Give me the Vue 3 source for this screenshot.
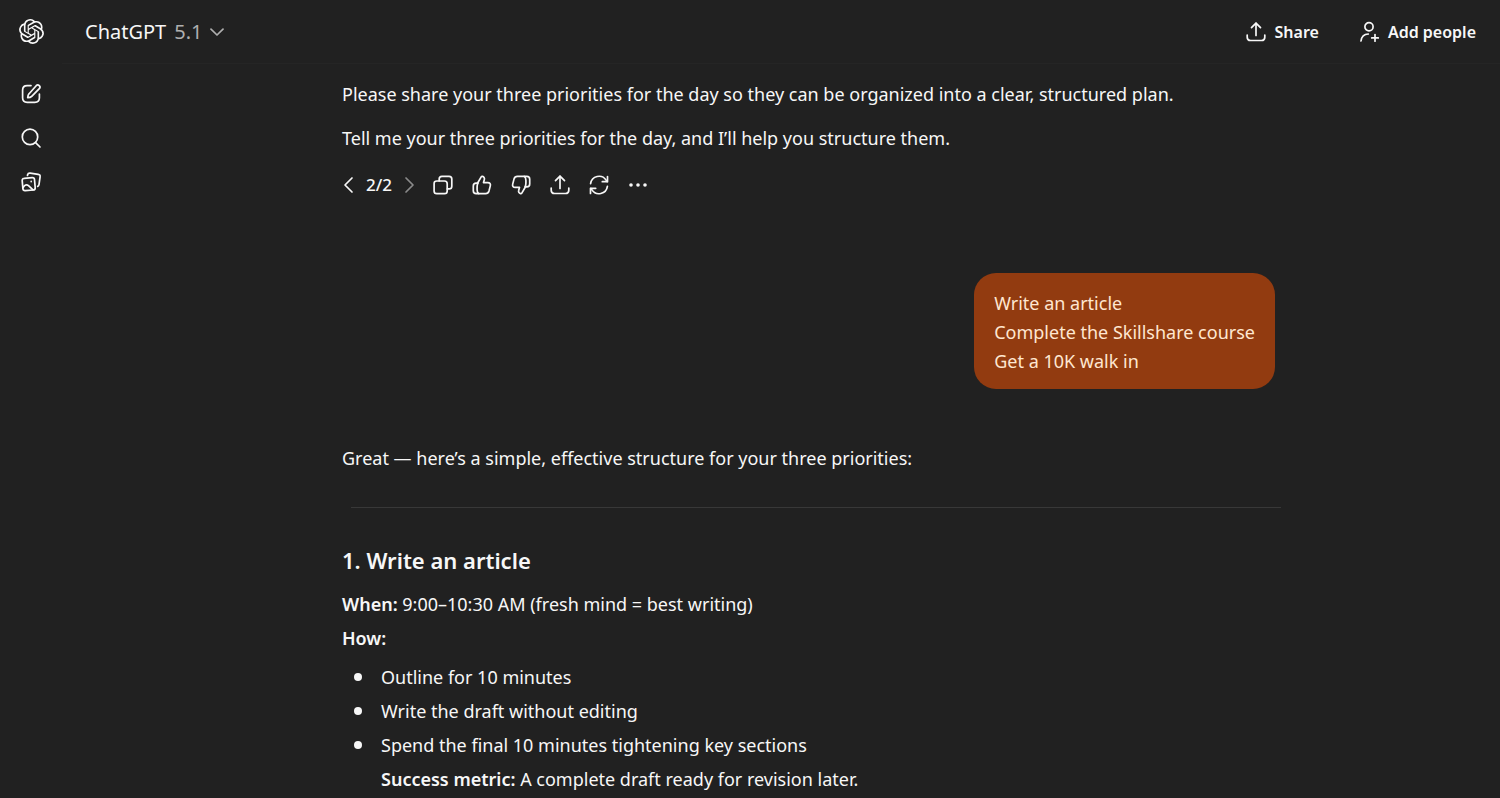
<template>
  <div class="app">
    <nav class="sidebar" aria-label="Sidebar">
      <a href="#" class="logo" aria-label="Home">
        <svg viewBox="0 0 24 24" width="25" height="25" fill="currentColor">
          <path
            d="M22.2819 9.8211a5.9847 5.9847 0 0 0-.5157-4.9108 6.0462 6.0462 0 0 0-6.5098-2.9A6.0651 6.0651 0 0 0 4.9807 4.1818a5.9847 5.9847 0 0 0-3.9977 2.9 6.0462 6.0462 0 0 0 .7427 7.0966 5.98 5.98 0 0 0 .511 4.9107 6.051 6.051 0 0 0 6.5146 2.9001A5.9847 5.9847 0 0 0 13.2599 24a6.0557 6.0557 0 0 0 5.7718-4.2058 5.9894 5.9894 0 0 0 3.9977-2.9001 6.0557 6.0557 0 0 0-.7475-7.0729zm-9.022 12.6081a4.4755 4.4755 0 0 1-2.8764-1.0408l.1419-.0804 4.7783-2.7582a.7948.7948 0 0 0 .3927-.6813v-6.7369l2.02 1.1686a.071.071 0 0 1 .038.052v5.5826a4.504 4.504 0 0 1-4.4945 4.4944zm-9.6607-4.1254a4.4708 4.4708 0 0 1-.5346-3.0137l.142.0852 4.783 2.7582a.7712.7712 0 0 0 .7806 0l5.8428-3.3685v2.3324a.0804.0804 0 0 1-.0332.0615L9.74 19.9502a4.4992 4.4992 0 0 1-6.1408-1.6464zM2.3408 7.8956a4.485 4.485 0 0 1 2.3655-1.9728V11.6a.7664.7664 0 0 0 .3879.6765l5.8144 3.3543-2.0201 1.1685a.0757.0757 0 0 1-.071 0l-4.8303-2.7865A4.504 4.504 0 0 1 2.3408 7.872zm16.5963 3.8558L13.1038 8.364 15.1192 7.2a.0757.0757 0 0 1 .071 0l4.8303 2.7913a4.4944 4.4944 0 0 1-.6765 8.1042v-5.6772a.79.79 0 0 0-.407-.667zm2.0107-3.0231l-.142-.0852-4.7735-2.7818a.7759.7759 0 0 0-.7854 0L9.409 9.2297V6.8974a.0662.0662 0 0 1 .0284-.0615l4.8303-2.7866a4.4992 4.4992 0 0 1 6.6802 4.66zM8.3065 12.863l-2.02-1.1638a.0804.0804 0 0 1-.038-.0567V6.0742a4.4992 4.4992 0 0 1 7.3757-3.4537l-.142.0805L8.704 5.459a.7948.7948 0 0 0-.3927.6813zm1.0976-2.3654l2.602-1.4998 2.6069 1.4998v2.9994l-2.5974 1.4997-2.6067-1.4997Z"
          />
        </svg>
      </a>
      <button
        v-for="item in sidebarItems"
        :key="item.label"
        type="button"
        class="sidebar-button"
        :aria-label="item.label"
      >
        <svg class="icon" viewBox="0 0 24 24" width="24" height="24">
          <path v-for="d in item.paths" :key="d" :d="d" />
        </svg>
      </button>
    </nav>

    <div class="main">
      <header class="header">
        <button type="button" class="model-button">
          <span>ChatGPT</span>
          <span class="version">5.1</span>
          <svg class="icon chevron" viewBox="0 0 14 14" width="14" height="14">
            <path d="M1 4.2l6 5.8 6-5.8" />
          </svg>
        </button>
        <div class="header-actions">
          <button type="button" class="header-button">
            <svg class="icon" viewBox="0 0 24 24" width="24" height="24">
              <path v-for="d in icons.share" :key="d" :d="d" />
            </svg>
            Share
          </button>
          <button type="button" class="header-button">
            <svg class="icon" viewBox="0 0 24 24" width="24" height="24">
              <path v-for="d in icons.addPerson" :key="d" :d="d" />
            </svg>
            Add people
          </button>
        </div>
      </header>

      <main class="thread">
        <article class="reply">
          <p>
            Please share your three priorities for the day so they can be
            organized into a clear, structured plan.
          </p>
          <p>
            Tell me your three priorities for the day, and I’ll help you
            structure them.
          </p>
        </article>

        <div class="actions">
          <button type="button" class="pager" aria-label="Previous response">
            <svg class="icon" viewBox="0 0 12 18" width="12" height="18">
              <path d="M10 2L3 9l7 7" />
            </svg>
          </button>
          <span class="page">2/2</span>
          <button type="button" class="pager" aria-label="Next response" disabled>
            <svg class="icon" viewBox="0 0 12 18" width="12" height="18">
              <path d="M2 2l7 7-7 7" />
            </svg>
          </button>
          <button
            v-for="action in replyActions"
            :key="action.label"
            type="button"
            class="action"
            :aria-label="action.label"
          >
            <svg
              class="icon"
              :class="{ dots: action.dots }"
              viewBox="0 0 24 24"
              width="24"
              height="24"
            >
              <path v-for="d in action.paths" :key="d" :d="d" />
            </svg>
          </button>
        </div>

        <div class="bubble">
          <div v-for="line in userLines" :key="line">{{ line }}</div>
        </div>

        <article class="reply">
          <p>
            Great — here’s a simple, effective structure for your three
            priorities:
          </p>
          <hr />
          <h2>1. Write an article</h2>
          <p>
            <strong>When:</strong> 9:00–10:30 AM (fresh mind = best writing)<br />
            <strong>How:</strong>
          </p>
          <ul>
            <li>Outline for 10 minutes</li>
            <li>Write the draft without editing</li>
            <li>
              Spend the final 10 minutes tightening key sections<br />
              <strong>Success metric:</strong> A complete draft ready for
              revision later.
            </li>
          </ul>
        </article>
      </main>
    </div>
  </div>
</template>

<script setup>
// Stroke paths on a 24px grid
const icons = {
  compose: [
    "M12 3.6H8.2C5 3.6 3.6 5 3.6 8.2v7.6c0 3.2 1.4 4.6 4.6 4.6h7.6c3.2 0 4.6-1.4 4.6-4.6V12",
    "M17.2 3.7a2.1 2.1 0 0 1 3.1 3l-7.6 7.6c-.9.9-2.2 1.3-4 1.4.1-1.8.5-3.1 1.4-4z",
  ],
  search: ["M11 3.2a7.7 7.7 0 1 0 0 15.4a7.7 7.7 0 1 0 0-15.4", "M16.6 16.6l4.4 4.4"],
  library: [
    "M5.2 8.4l8-.8c1.4-.1 2.2.6 2.3 1.9l.7 8.2c.1 1.5-.5 2.2-1.9 2.3l-8 .7c-1.5.1-2.3-.5-2.4-1.9l-.7-8.2c-.1-1.3.6-2.1 2-2.2z",
    "M8.5 5.4V5c.4-1.500 1.200-2 2.700-1.800l8 1.100c1.500.2 2.100 1.100 1.900 2.600l-1.100 7.700c-.2 1-.5 1.500-1.300 1.800",
    "M4 17.800c1.700-2.800 3.500-3.700 5.500-2.200l4.500 4.300",
    "M12.200 11.400v.2",
  ],
  copy: [
    "M5.800 8h7.700q2.700 0 2.700 2.700V18q0 2.700-2.700 2.700H5.800q-2.700 0-2.700-2.700v-7.300Q3.100 8 5.800 8z",
    "M8.200 7.800V6q0-2.700 2.700-2.700h7.200q2.700 0 2.700 2.700v7.200q0 2.700-2.700 2.700h-1.700",
  ],
  like: [
    "M7.500 10.200l3.700-6.300c.3-.5.700-.6 1.200-.5 1.600.4 2.400 1.700 1.900 3.300l-.8 2.900h4.300c2.100 0 3 1.400 2.500 3.300l-1.300 5c-.5 1.700-1.500 2.700-3.400 2.700H6.200c-2 0-2.900-1-2.900-2.900v-4.600c0-1.900.9-2.900 2.900-2.900z",
    "M8 10.200c-.8 1-.9 2-.9 3.800v2.700c0 1.900.4 3.100 1.700 3.900",
  ],
  share: ["M12 15.500V3.300", "M7.500 7.700L12 3.200l4.500 4.500", "M3.200 15v2.200c0 2.300 1 3.300 3.300 3.300h11c2.300 0 3.300-1 3.300-3.300V15"],
  refresh: [
    "M3.600 10.600a8.500 8.500 0 0 1 15.500-3.500l1 1.500",
    "M20.500 3.500v5.200h-5.200",
    "M20.400 13.400a8.500 8.500 0 0 1-15.500 3.500l-1-1.500",
    "M3.500 20.500v-5.200h5.200",
  ],
  addPerson: [
    "M12 2.600a4.100 4.100 0 1 0 0 8.200a4.100 4.100 0 1 0 0-8.200",
    "M4 21c.5-4.200 3.300-6.800 7.300-7",
    "M18 14.600v6.600",
    "M14.700 17.900h6.600",
  ],
  more: ["M5 12h.01", "M12 12h.01", "M19 12h.01"],
};

// Same hand as "like", turned upside down
const dislike = [
  "M16.500 13.800l-3.700 6.300c-.3.500-.7.600-1.200.5-1.600-.4-2.400-1.700-1.900-3.300l.8-2.900H6.200c-2.100 0-3-1.400-2.500-3.300l1.300-5c.5-1.700 1.500-2.700 3.400-2.700h9.400c2 0 2.900 1 2.900 2.900v4.600c0 1.900-.9 2.900-2.900 2.900z",
  "M16 13.800c.8-1 .9-2 .9-3.800V7.300c0-1.900-.4-3.100-1.700-3.900",
];

const sidebarItems = [
  { label: "New chat", paths: icons.compose },
  { label: "Search chats", paths: icons.search },
  { label: "Library", paths: icons.library },
];

const replyActions = [
  { label: "Copy", paths: icons.copy },
  { label: "Good response", paths: icons.like },
  { label: "Bad response", paths: dislike },
  { label: "Share", paths: icons.share },
  { label: "Try again", paths: icons.refresh },
  { label: "More actions", paths: icons.more, dots: true },
];

const userLines = [
  "Write an article",
  "Complete the Skillshare course",
  "Get a 10K walk in",
];
</script>

<style>
body {
  margin: 0;
  background: #212121;
}
</style>

<style scoped>
.app {
  display: flex;
  min-height: 100vh;
  background: #212121;
  color: #f7f7f7;
  font-family: "Segoe UI", "Noto Sans", "Open Sans", sans-serif;
  font-size: 18px;
  line-height: 34px;
}

button {
  display: flex;
  align-items: center;
  padding: 0;
  border: 0;
  background: none;
  color: inherit;
  font: inherit;
  cursor: pointer;
}

.icon {
  flex: none;
  fill: none;
  stroke: currentColor;
  stroke-width: 1.7;
  stroke-linecap: round;
  stroke-linejoin: round;
}

.icon.dots {
  stroke-width: 3.6;
}

/* Sidebar */
.sidebar {
  display: flex;
  flex: none;
  flex-direction: column;
  align-items: center;
  width: 62px;
}

.logo {
  display: flex;
  align-items: center;
  height: 63px;
  margin-bottom: 9px;
  color: inherit;
}

.sidebar-button {
  justify-content: center;
  width: 44px;
  height: 44px;
}

/* Header */
.main {
  flex: 1;
  min-width: 0;
}

.header {
  display: flex;
  align-items: center;
  justify-content: space-between;
  height: 63px;
  padding: 0 24px 0 23px;
  border-bottom: 1px solid #252525;
}

.model-button {
  gap: 8px;
  font-size: 20px;
}

.version {
  color: #afafaf;
}

.chevron {
  color: #afafaf;
}

.header-actions {
  display: flex;
  gap: 38px;
}

.header-button {
  gap: 7px;
  font-size: 16px;
  font-weight: 600;
}

/* Conversation */
.thread {
  display: flex;
  flex-direction: column;
  box-sizing: border-box;
  max-width: 988px;
  margin: 0 auto;
  padding: 13px 0 0 55px;
}

p {
  margin: 0 0 10px;
}

.actions {
  display: flex;
  align-items: center;
  height: 34px;
  margin: 3px 0 71px;
}

.pager:disabled {
  color: #8a8a8a;
}

.page {
  margin: 0 12px;
  font-size: 17px;
  font-weight: 500;
}

.action {
  justify-content: center;
  width: 39px;
}

.pager + .action {
  margin-left: 7px;
}

.bubble {
  align-self: flex-end;
  margin-bottom: 52px;
  padding: 16px 20px 13px;
  border-radius: 22px;
  background: #923b10;
  color: #ffe7d0;
  line-height: 29px;
}

hr {
  height: 1px;
  margin: 32px -6px 35px 9px;
  border: 0;
  background: #383838;
}

h2 {
  margin: 0 0 10px;
  font-size: 22px;
  font-weight: 600;
  line-height: 34px;
}

strong {
  font-weight: 600;
}

ul {
  margin: -5px 0 0;
  padding-left: 39px;
  list-style: none;
}

li::before {
  content: "";
  float: left;
  width: 8px;
  height: 8px;
  margin: 13px 19px 0 -27px;
  border-radius: 50%;
  background: currentColor;
}
</style>
